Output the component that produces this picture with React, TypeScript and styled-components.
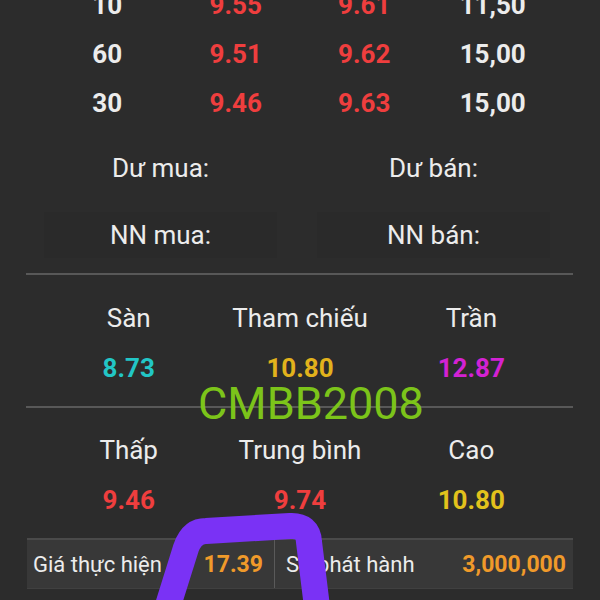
import React from "react";
import styled, { createGlobalStyle } from "styled-components";

const GlobalStyle = createGlobalStyle`
  html, body { margin: 0; padding: 0; background: #2c2c2c; }
  body { font-family: Roboto, "Noto Sans", "Liberation Sans", sans-serif; }
`;

const Page = styled.div`
  position: relative;
  width: 600px;
  height: 600px;
  overflow: hidden;
  background: #2c2c2c;
  color: #ececec;
`;

const Content = styled.div`
  margin-top: -20px;
  display: flex;
  flex-direction: column;
`;

const PriceTable = styled.div`
  display: grid;
  grid-template-columns: repeat(4, 1fr);
  grid-auto-rows: 49px;
  padding: 0 43px;
`;

const Num = styled.div<{ $color?: string; $size?: number }>`
  display: flex;
  align-items: center;
  justify-content: center;
  font-weight: 700;
  font-size: ${(p) => p.$size ?? 26}px;
  color: ${(p) => p.$color ?? "#ececec"};
`;

const HalfGrid = styled.div`
  margin-top: 18px;
  display: grid;
  grid-template-columns: 1fr 1fr;
  grid-auto-rows: 46px;
  row-gap: 21px;
  padding: 0 30px 0 24px;
`;

const HalfCell = styled.div<{ $shade?: boolean }>`
  display: flex;
  align-items: center;
  justify-content: center;
  font-size: 26px;
  color: #ececec;
  background: ${(p) => (p.$shade ? "#2a2a2a" : "transparent")};
  margin: 0 ${(p) => (p.$shade ? "20px" : "0")};
`;

const Divider = styled.div<{ $top: number }>`
  margin: ${(p) => p.$top}px 27px 0 26px;
  height: 2px;
  background: #585858;
`;

const TriGrid = styled.div<{ $top: number }>`
  margin-top: ${(p) => p.$top}px;
  display: grid;
  grid-template-columns: repeat(3, 1fr);
  grid-auto-rows: 50px;
  padding: 0 43px;
`;

const Label = styled.div`
  display: flex;
  align-items: center;
  justify-content: center;
  font-size: 26px;
  color: #ececec;
`;

const InfoBox = styled.div`
  margin: 13px 27px 0 27px;
  height: 51px;
  display: grid;
  grid-template-columns: 247px 1fr;
  background: #383838;
  border-top: 2px solid #4a4a4a;
  border-bottom: 1px solid #404040;
  box-sizing: border-box;
`;

const InfoCell = styled.div<{ $first?: boolean }>`
  display: flex;
  align-items: center;
  justify-content: space-between;
  padding: ${(p) => (p.$first ? "0 11px 0 6px" : "0 7px 0 11px")};
  border-left: ${(p) => (p.$first ? "none" : "1px solid #5a5a5a")};
`;

const InfoLabel = styled.span`
  font-size: 22px;
  color: #ececec;
`;

const InfoValue = styled.span`
  font-size: 23px;
  font-weight: 700;
  color: #f09a2a;
`;

const Watermark = styled.div`
  position: absolute;
  left: 0;
  right: 0;
  top: 377px;
  text-align: center;
  padding-left: 22px;
  font-size: 45px;
  line-height: 54px;
  color: #7cc41a;
  pointer-events: none;
`;

const Scribble = styled.svg`
  position: absolute;
  left: 0;
  top: 0;
  width: 600px;
  height: 600px;
  pointer-events: none;
`;

const RED = "#ef3e3e";
const WHITE = "#ececec";

const rows = [
  ["10", "9.55", "9.61", "11,50"],
  ["60", "9.51", "9.62", "15,00"],
  ["30", "9.46", "9.63", "15,00"],
];

export default function App() {
  return (
    <>
      <GlobalStyle />
      <Page>
        <Content>
          <PriceTable>
            {rows.map((r, i) => (
              <React.Fragment key={i}>
                <Num $color={WHITE}>{r[0]}</Num>
                <Num $color={RED}>{r[1]}</Num>
                <Num $color={RED}>{r[2]}</Num>
                <Num $color={WHITE}>{r[3]}</Num>
              </React.Fragment>
            ))}
          </PriceTable>

          <HalfGrid>
            <HalfCell>Dư mua:</HalfCell>
            <HalfCell>Dư bán:</HalfCell>
            <HalfCell $shade>NN mua:</HalfCell>
            <HalfCell $shade>NN bán:</HalfCell>
          </HalfGrid>

          <Divider $top={15} />

          <TriGrid $top={18}>
            <Label>Sàn</Label>
            <Label>Tham chiếu</Label>
            <Label>Trần</Label>
            <Num $color="#22c6c6">8.73</Num>
            <Num $color="#e2b21c">10.80</Num>
            <Num $color="#d322d3">12.87</Num>
          </TriGrid>

          <Divider $top={13} />

          <TriGrid $top={17}>
            <Label>Thấp</Label>
            <Label>Trung bình</Label>
            <Label>Cao</Label>
            <Num $color={RED}>9.46</Num>
            <Num $color={RED}>9.74</Num>
            <Num $color="#e2c21c">10.80</Num>
          </TriGrid>

          <InfoBox>
            <InfoCell $first>
              <InfoLabel>Giá thực hiện</InfoLabel>
              <InfoValue>17.39</InfoValue>
            </InfoCell>
            <InfoCell>
              <InfoLabel>Số phát hành</InfoLabel>
              <InfoValue>3,000,000</InfoValue>
            </InfoCell>
          </InfoBox>
        </Content>

        <Watermark>CMBB2008</Watermark>

        <Scribble viewBox="0 0 600 600">
          <path
            d="M 165 615 L 186 548 Q 192 531 206 531 L 290 526 Q 308 525 309 542 L 318 615"
            fill="none"
            stroke="#7a32f5"
            strokeWidth={26}
            strokeLinecap="round"
            strokeLinejoin="round"
          />
        </Scribble>
      </Page>
    </>
  );
}
